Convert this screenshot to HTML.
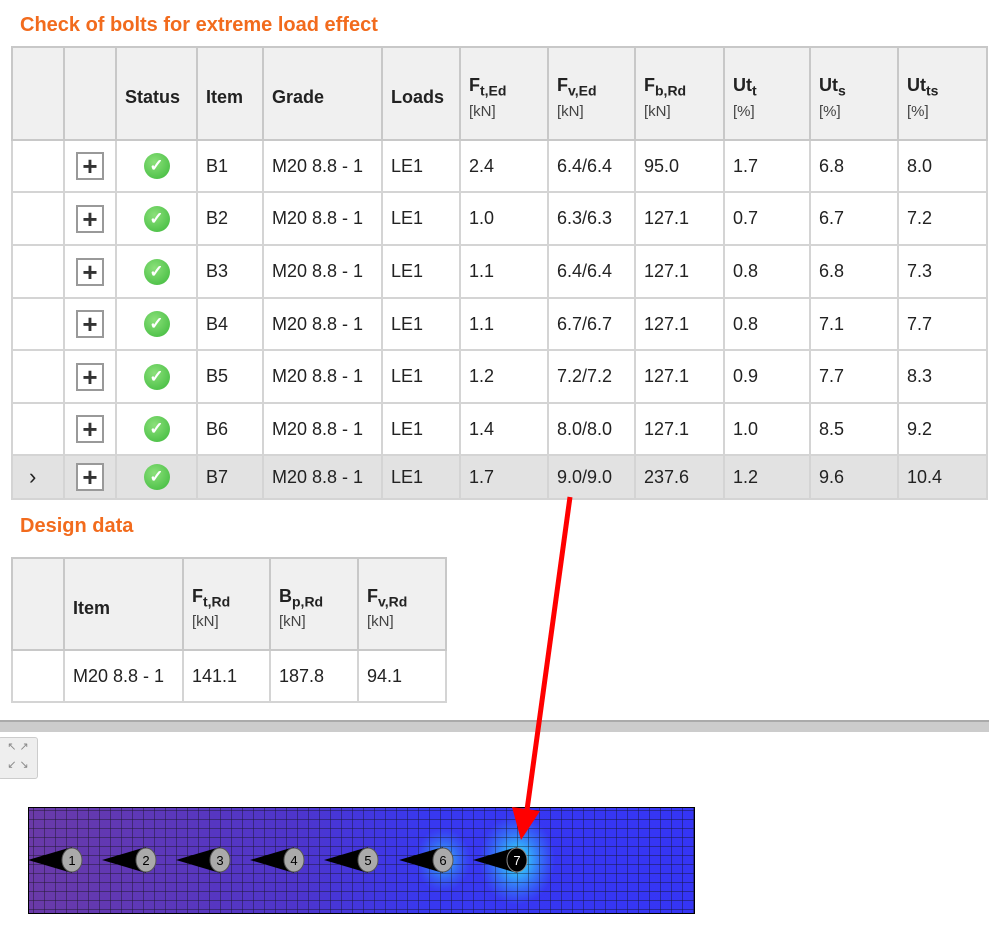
<!DOCTYPE html><html><head><style>
body{margin:0;width:989px;height:933px;background:#fff;font-family:"Liberation Sans",sans-serif;position:relative;overflow:hidden;color:#222}
h2{position:absolute;margin:0;color:#f26b1d;font-size:20px;font-weight:bold;left:20px}
table{position:absolute;border-collapse:collapse;font-size:18px;table-layout:fixed}
td,th{border:2px solid #d4d4d4;padding:0 0 0 8px;text-align:left;white-space:nowrap;overflow:hidden}
th{background:#f0f0f0;font-weight:bold;border-color:#c8c8c8;padding-top:8px}
th small{display:block;font-weight:normal;font-size:15px;color:#444;margin-top:4px}
sub{font-size:14px}
.pl{display:inline-block;width:28px;height:28px;border:2px solid #999;box-sizing:border-box;text-align:center;line-height:24px;font-size:26px;font-weight:bold;color:#333}
.ok{display:inline-block;width:26px;height:26px;border-radius:50%;background:radial-gradient(circle at 40% 35%,#8be07a,#3cb83a);color:#fff;text-align:center;line-height:26px;font-size:17px;font-weight:bold}
</style></head><body>
<h2 style="top:14px">Check of bolts for extreme load effect</h2>
<table style="left:11px;top:46px;width:975px;border:2px solid #aaa">
<colgroup><col style="width:52px"><col style="width:52px"><col style="width:81px"><col style="width:66px"><col style="width:119px"><col style="width:78px"><col style="width:88px"><col style="width:87px"><col style="width:89px"><col style="width:86px"><col style="width:88px"><col style="width:89px"></colgroup>
<tr style="height:93px"><th></th><th></th><th>Status</th><th>Item</th><th>Grade</th><th>Loads</th><th>F<sub>t,Ed</sub><small>[kN]</small></th><th>F<sub>v,Ed</sub><small>[kN]</small></th><th>F<sub>b,Rd</sub><small>[kN]</small></th><th>Ut<sub>t</sub><small>[%]</small></th><th>Ut<sub>s</sub><small>[%]</small></th><th>Ut<sub>ts</sub><small>[%]</small></th></tr>
<tr style="height:52px"><td></td><td style="text-align:center;padding:0"><span class="pl">+</span></td><td style="text-align:center;padding:0"><span class="ok">✓</span></td><td>B1</td><td>M20 8.8 - 1</td><td>LE1</td><td>2.4</td><td>6.4/6.4</td><td>95.0</td><td>1.7</td><td>6.8</td><td>8.0</td></tr>
<tr style="height:53px"><td></td><td style="text-align:center;padding:0"><span class="pl">+</span></td><td style="text-align:center;padding:0"><span class="ok">✓</span></td><td>B2</td><td>M20 8.8 - 1</td><td>LE1</td><td>1.0</td><td>6.3/6.3</td><td>127.1</td><td>0.7</td><td>6.7</td><td>7.2</td></tr>
<tr style="height:53px"><td></td><td style="text-align:center;padding:0"><span class="pl">+</span></td><td style="text-align:center;padding:0"><span class="ok">✓</span></td><td>B3</td><td>M20 8.8 - 1</td><td>LE1</td><td>1.1</td><td>6.4/6.4</td><td>127.1</td><td>0.8</td><td>6.8</td><td>7.3</td></tr>
<tr style="height:52px"><td></td><td style="text-align:center;padding:0"><span class="pl">+</span></td><td style="text-align:center;padding:0"><span class="ok">✓</span></td><td>B4</td><td>M20 8.8 - 1</td><td>LE1</td><td>1.1</td><td>6.7/6.7</td><td>127.1</td><td>0.8</td><td>7.1</td><td>7.7</td></tr>
<tr style="height:53px"><td></td><td style="text-align:center;padding:0"><span class="pl">+</span></td><td style="text-align:center;padding:0"><span class="ok">✓</span></td><td>B5</td><td>M20 8.8 - 1</td><td>LE1</td><td>1.2</td><td>7.2/7.2</td><td>127.1</td><td>0.9</td><td>7.7</td><td>8.3</td></tr>
<tr style="height:52px"><td></td><td style="text-align:center;padding:0"><span class="pl">+</span></td><td style="text-align:center;padding:0"><span class="ok">✓</span></td><td>B6</td><td>M20 8.8 - 1</td><td>LE1</td><td>1.4</td><td>8.0/8.0</td><td>127.1</td><td>1.0</td><td>8.5</td><td>9.2</td></tr>
<tr style="height:44px;background:#e2e2e2"><td style="font-size:22px;padding-left:16px">›</td><td style="text-align:center;padding:0"><span class="pl" style="background:#fff">+</span></td><td style="text-align:center;padding:0"><span class="ok">✓</span></td><td>B7</td><td>M20 8.8 - 1</td><td>LE1</td><td>1.7</td><td>9.0/9.0</td><td>237.6</td><td>1.2</td><td>9.6</td><td>10.4</td></tr>
</table>
<h2 style="top:515px">Design data</h2>
<table style="left:11px;top:557px;width:434px;border:2px solid #aaa">
<colgroup><col style="width:52px"><col style="width:119px"><col style="width:87px"><col style="width:88px"><col style="width:88px"></colgroup>
<tr style="height:92px"><th></th><th>Item</th><th>F<sub>t,Rd</sub><small>[kN]</small></th><th>B<sub>p,Rd</sub><small>[kN]</small></th><th>F<sub>v,Rd</sub><small>[kN]</small></th></tr>
<tr style="height:52px"><td></td><td>M20 8.8 - 1</td><td>141.1</td><td>187.8</td><td>94.1</td></tr>
</table>
<div style="position:absolute;left:0;top:720px;width:989px;height:10px;background:#ccc;border-top:2px solid #aaa"></div>
<div style="position:absolute;left:-2px;top:737px;width:38px;height:40px;background:#eee;border:1px solid #ccc;border-radius:3px;color:#888;font-size:11px;line-height:18px;text-align:center">↖ ↗<br>↙ ↘</div>
<svg style="position:absolute;left:0;top:0" width="989" height="933">
<defs><linearGradient id="g" x1="0" x2="1"><stop offset="0" stop-color="#6a3aa8"/><stop offset="0.4" stop-color="#4e35cc"/><stop offset="0.6" stop-color="#3838f0"/><stop offset="1" stop-color="#3535f5"/></linearGradient>
<pattern id="p" width="11" height="9" patternUnits="userSpaceOnUse"><path d="M0 0H11M0 0V9" stroke="#111" stroke-width="1" fill="none"/></pattern>
<radialGradient id="c"><stop offset="0" stop-color="#3ff"/><stop offset="1" stop-color="#3af" stop-opacity="0"/></radialGradient></defs>
<rect x="28" y="807" width="667" height="107" fill="url(#g)"/>
<ellipse cx="443" cy="860" rx="28" ry="32" fill="url(#c)" opacity=".7"/>
<ellipse cx="517" cy="860" rx="38" ry="45" fill="url(#c)"/>
<rect x="28" y="807" width="667" height="107" fill="url(#p)" opacity=".8"/>
<rect x="28.5" y="807.5" width="666" height="106" fill="none" stroke="#000"/>
<g font-size="13" text-anchor="middle">
<g fill="#000"><path d="M28 860L72 847V873Z"/><path d="M102 860L146 847V873Z"/><path d="M176 860L220 847V873Z"/><path d="M250 860L294 847V873Z"/><path d="M324 860L368 847V873Z"/><path d="M399 860L443 847V873Z"/><path d="M473 860L517 847V873Z"/></g>
<g fill="#aaa" stroke="#555"><ellipse cx="72" cy="860" rx="10" ry="12"/><ellipse cx="146" cy="860" rx="10" ry="12"/><ellipse cx="220" cy="860" rx="10" ry="12"/><ellipse cx="294" cy="860" rx="10" ry="12"/><ellipse cx="368" cy="860" rx="10" ry="12"/><ellipse cx="443" cy="860" rx="10" ry="12"/></g>
<ellipse cx="517" cy="860" rx="10" ry="12" fill="#000" stroke="#888"/>
<text x="72" y="865">1</text><text x="146" y="865">2</text><text x="220" y="865">3</text><text x="294" y="865">4</text><text x="368" y="865">5</text><text x="443" y="865">6</text><text x="517" y="865" fill="#fff">7</text></g>
<line x1="570" y1="497" x2="527" y2="810" stroke="#f00" stroke-width="5"/>
<path d="M512 807L540 811L521 840Z" fill="#f00"/>
</svg>
</body></html>
